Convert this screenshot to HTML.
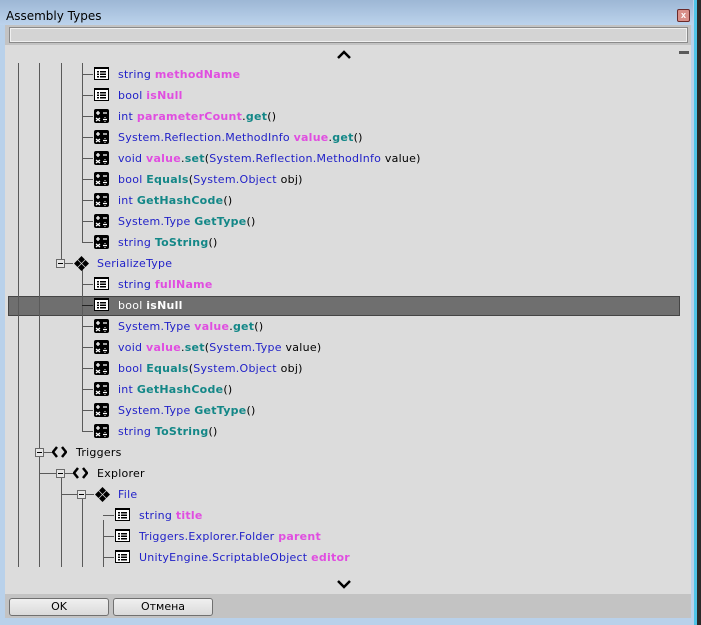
<!DOCTYPE html>
<html><head><meta charset="utf-8"><style>
body{margin:0;width:701px;height:625px;overflow:hidden;background:#b9d1ea;font-family:"DejaVu Sans","Liberation Sans",sans-serif;position:relative}
.abs{position:absolute}
#title{left:0;top:0;width:693px;height:25px;background:linear-gradient(#9db7d5,#bcd3ec)}
#tt{left:6px;top:9px;font:12px "DejaVu Sans",sans-serif;color:#000}
#close{left:677px;top:9px;width:11px;height:11px;border:1px solid #6b2a2a;background:#d9908a;border-radius:2px;color:#fff;font:bold 9px sans-serif;text-align:center;line-height:11px}
#edge{left:697px;top:0;width:4px;height:625px;background:#2a2a2a}
#edge2{left:694px;top:0;width:3px;height:625px;background:#4fc4e8}
#panel{left:5px;top:25px;width:686px;height:593px;background:#c3c3c3}
#search{left:9px;top:27px;width:677px;height:14px;background:#d4d4d4;border:1px solid #8a8a8a;box-shadow:inset 0 0 0 1px #f0f0f0}
#tree{left:5px;top:45px;width:686px;height:549px;background:#dcdcdc}
.v{position:absolute;width:1px;background:#5a5a5a}
.h{position:absolute;height:1px;background:#5a5a5a}
.r{position:absolute;font-size:11px;letter-spacing:0.25px;line-height:14px;white-space:nowrap;color:#000;margin-top:1px}
.t{color:#1f1fc8}.n{color:#e04ee0;font-weight:bold}.m{color:#138787;font-weight:bold}
.ic{position:absolute}
.box{position:absolute;width:7px;height:7px;border:1px solid #6a6a6a;background:#e6e6e6}
.box:after{content:"";position:absolute;left:1px;top:3px;width:5px;height:1px;background:#000}
.btn{position:absolute;top:598px;height:16px;border:1px solid #707070;border-radius:3px;background:linear-gradient(#f0f0f0,#dadada);font-size:11px;text-align:center;line-height:16px}
#hl{left:8px;top:296px;width:670px;height:18px;background:#6f6f6f;border:1px solid #454545}
</style></head><body>
<div id="edge2" class="abs"></div><div id="edge" class="abs"></div>
<div id="title" class="abs"></div>
<div id="tt" class="abs">Assembly Types</div>
<div id="close" class="abs">x</div>
<div id="panel" class="abs"></div>
<div id="search" class="abs"></div>
<div id="tree" class="abs"></div>
<div class="abs" style="left:679px;top:51px;width:10px;height:3px;background:#5a5a5a"></div>
<svg class="abs" style="left:336px;top:50px" width="16" height="10"><path d="M2 8 L8 2 L14 8" stroke="#000" stroke-width="2.5" fill="none"/></svg>
<svg class="abs" style="left:336px;top:579px" width="16" height="10"><path d="M2 2 L8 8 L14 2" stroke="#000" stroke-width="2.5" fill="none"/></svg>
<div id="hl" class="abs"></div>

<div class="v" style="left:18px;top:63px;height:504px"></div>
<div class="v" style="left:39px;top:63px;height:385px"></div>
<div class="v" style="left:39px;top:457px;height:110px"></div>
<div class="v" style="left:61px;top:63px;height:196px"></div>
<div class="v" style="left:61px;top:478px;height:89px"></div>
<div class="v" style="left:82px;top:63px;height:180px"></div>
<div class="v" style="left:82px;top:268px;height:164px"></div>
<div class="v" style="left:82px;top:499px;height:68px"></div>
<div class="v" style="left:103px;top:520px;height:47px"></div>

<svg width="0" height="0" style="position:absolute"><defs>
<g id="fi"><rect x="0.5" y="0.5" width="14" height="12" fill="#fff" stroke="#000"/><rect x="0" y="0" width="15" height="2" fill="#000"/><rect x="3" y="4" width="2" height="1.5"/><rect x="6" y="4" width="6" height="1.5"/><rect x="3" y="6.5" width="2" height="1.5"/><rect x="6" y="6.5" width="6" height="1.5"/><rect x="3" y="9" width="2" height="1.5"/><rect x="6" y="9" width="6" height="1.5"/></g>
<g id="mi"><rect x="0" y="0" width="15" height="14" rx="2" fill="#000"/><path d="M2 4h4M4 2v4M9 4h4M2 9l4 3M6 9l-4 3M9 10.5h4" stroke="#fff" stroke-width="1.3"/><rect x="10.5" y="8" width="1" height="1" fill="#fff"/><rect x="10.5" y="12" width="1" height="1" fill="#fff"/></g>
<g id="di"><path d="M7.5 0 L11 3.5 L7.5 7 L4 3.5Z M3.5 4 L7 7.5 L3.5 11 L0 7.5Z M11.5 4 L15 7.5 L11.5 11 L8 7.5Z M7.5 8 L11 11.5 L7.5 15 L4 11.5Z" fill="#000"/></g>
<g id="ni"><path d="M5 2 L1 7 L5 12 M10 2 L14 7 L10 12" stroke="#000" stroke-width="2.5" fill="none"/></g>
</defs></svg>

<div class="h" style="left:82px;top:74px;width:11px"></div><svg class="ic" style="left:94px;top:67px" width="15" height="14"><use href="#fi"/></svg><div class="r" style="left:118px;top:67px"><span class="t">string </span><span class="n">methodName</span></div>
<div class="h" style="left:82px;top:95px;width:11px"></div><svg class="ic" style="left:94px;top:88px" width="15" height="14"><use href="#fi"/></svg><div class="r" style="left:118px;top:88px"><span class="t">bool </span><span class="n">isNull</span></div>
<div class="h" style="left:82px;top:116px;width:11px"></div><svg class="ic" style="left:94px;top:109px" width="15" height="14"><use href="#mi"/></svg><div class="r" style="left:118px;top:109px"><span class="t">int </span><span class="n">parameterCount</span>.<span class="m">get</span>()</div>
<div class="h" style="left:82px;top:137px;width:11px"></div><svg class="ic" style="left:94px;top:130px" width="15" height="14"><use href="#mi"/></svg><div class="r" style="left:118px;top:130px"><span class="t">System.Reflection.MethodInfo </span><span class="n">value</span>.<span class="m">get</span>()</div>
<div class="h" style="left:82px;top:158px;width:11px"></div><svg class="ic" style="left:94px;top:151px" width="15" height="14"><use href="#mi"/></svg><div class="r" style="left:118px;top:151px"><span class="t">void </span><span class="n">value</span>.<span class="m">set</span>(<span class="t">System.Reflection.MethodInfo</span> value)</div>
<div class="h" style="left:82px;top:179px;width:11px"></div><svg class="ic" style="left:94px;top:172px" width="15" height="14"><use href="#mi"/></svg><div class="r" style="left:118px;top:172px"><span class="t">bool </span><span class="m">Equals</span>(<span class="t">System.Object</span> obj)</div>
<div class="h" style="left:82px;top:200px;width:11px"></div><svg class="ic" style="left:94px;top:193px" width="15" height="14"><use href="#mi"/></svg><div class="r" style="left:118px;top:193px"><span class="t">int </span><span class="m">GetHashCode</span>()</div>
<div class="h" style="left:82px;top:221px;width:11px"></div><svg class="ic" style="left:94px;top:214px" width="15" height="14"><use href="#mi"/></svg><div class="r" style="left:118px;top:214px"><span class="t">System.Type </span><span class="m">GetType</span>()</div>
<div class="h" style="left:82px;top:242px;width:11px"></div><svg class="ic" style="left:94px;top:235px" width="15" height="14"><use href="#mi"/></svg><div class="r" style="left:118px;top:235px"><span class="t">string </span><span class="m">ToString</span>()</div>

<div class="box" style="left:56px;top:259px"></div><div class="h" style="left:65px;top:263px;width:8px"></div>
<svg class="ic" style="left:74px;top:256px" width="15" height="15"><use href="#di"/></svg><div class="r t" style="left:97px;top:256px">SerializeType</div>
<div class="h" style="left:82px;top:284px;width:11px"></div><svg class="ic" style="left:94px;top:277px" width="15" height="14"><use href="#fi"/></svg><div class="r" style="left:118px;top:277px"><span class="t">string </span><span class="n">fullName</span></div>
<div class="h" style="left:82px;top:305px;width:11px;background:#222"></div><svg class="ic" style="left:94px;top:298px" width="15" height="14"><use href="#fi"/></svg><div class="r" style="left:118px;top:298px;color:#fff">bool <b>isNull</b></div>
<div class="h" style="left:82px;top:326px;width:11px"></div><svg class="ic" style="left:94px;top:319px" width="15" height="14"><use href="#mi"/></svg><div class="r" style="left:118px;top:319px"><span class="t">System.Type </span><span class="n">value</span>.<span class="m">get</span>()</div>
<div class="h" style="left:82px;top:347px;width:11px"></div><svg class="ic" style="left:94px;top:340px" width="15" height="14"><use href="#mi"/></svg><div class="r" style="left:118px;top:340px"><span class="t">void </span><span class="n">value</span>.<span class="m">set</span>(<span class="t">System.Type</span> value)</div>
<div class="h" style="left:82px;top:368px;width:11px"></div><svg class="ic" style="left:94px;top:361px" width="15" height="14"><use href="#mi"/></svg><div class="r" style="left:118px;top:361px"><span class="t">bool </span><span class="m">Equals</span>(<span class="t">System.Object</span> obj)</div>
<div class="h" style="left:82px;top:389px;width:11px"></div><svg class="ic" style="left:94px;top:382px" width="15" height="14"><use href="#mi"/></svg><div class="r" style="left:118px;top:382px"><span class="t">int </span><span class="m">GetHashCode</span>()</div>
<div class="h" style="left:82px;top:410px;width:11px"></div><svg class="ic" style="left:94px;top:403px" width="15" height="14"><use href="#mi"/></svg><div class="r" style="left:118px;top:403px"><span class="t">System.Type </span><span class="m">GetType</span>()</div>
<div class="h" style="left:82px;top:431px;width:11px"></div><svg class="ic" style="left:94px;top:424px" width="15" height="14"><use href="#mi"/></svg><div class="r" style="left:118px;top:424px"><span class="t">string </span><span class="m">ToString</span>()</div>

<div class="box" style="left:35px;top:448px"></div><div class="h" style="left:44px;top:452px;width:8px"></div>
<svg class="ic" style="left:52px;top:445px" width="15" height="14"><use href="#ni"/></svg><div class="r" style="left:76px;top:445px">Triggers</div>
<div class="h" style="left:39px;top:473px;width:18px"></div><div class="box" style="left:56px;top:469px"></div><div class="h" style="left:65px;top:473px;width:8px"></div>
<svg class="ic" style="left:73px;top:466px" width="15" height="14"><use href="#ni"/></svg><div class="r" style="left:97px;top:466px">Explorer</div>
<div class="h" style="left:61px;top:494px;width:17px"></div><div class="box" style="left:77px;top:490px"></div><div class="h" style="left:86px;top:494px;width:8px"></div>
<svg class="ic" style="left:95px;top:487px" width="15" height="15"><use href="#di"/></svg><div class="r t" style="left:118px;top:487px">File</div>
<div class="h" style="left:103px;top:515px;width:11px"></div><svg class="ic" style="left:115px;top:508px" width="15" height="14"><use href="#fi"/></svg><div class="r" style="left:139px;top:508px"><span class="t">string </span><span class="n">title</span></div>
<div class="h" style="left:103px;top:536px;width:11px"></div><svg class="ic" style="left:115px;top:529px" width="15" height="14"><use href="#fi"/></svg><div class="r" style="left:139px;top:529px"><span class="t">Triggers.Explorer.Folder </span><span class="n">parent</span></div>
<div class="h" style="left:103px;top:557px;width:11px"></div><svg class="ic" style="left:115px;top:550px" width="15" height="14"><use href="#fi"/></svg><div class="r" style="left:139px;top:550px"><span class="t">UnityEngine.ScriptableObject </span><span class="n">editor</span></div>

<div class="btn" style="left:9px;width:98px">OK</div>
<div class="btn" style="left:113px;width:98px">Отмена</div>
</body></html>
